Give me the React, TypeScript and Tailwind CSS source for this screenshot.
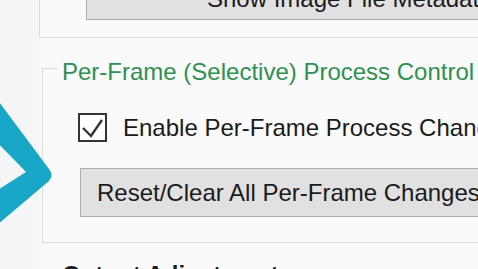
import React from "react";

export default function App() {
  return (
    <div
      className="relative flex h-[269px] w-[478px] overflow-hidden bg-[#fafafa] text-[#1b1b1b]"
      style={{ fontFamily: '"Liberation Sans", Arial, sans-serif' }}
    >
      {/* left strip */}
      <div className="h-full w-[39px] shrink-0 bg-[#f4f5f6]" />

      {/* content */}
      <div className="flex w-[620px] shrink-0 flex-col">
        {/* previous group box (bottom part) */}
        <div className="flex h-[38px] shrink-0 items-start border-b border-l border-[#dcdcdc]">
          <div className="ml-[46px] flex h-[20px] w-[520px] items-end whitespace-nowrap border-b border-l border-[#adadad] bg-[#e1e1e1] pb-[8px] pl-[120px] text-[24px] leading-[24px]">
            Show Image File Metadata
          </div>
        </div>

        {/* Per-Frame group box */}
        <div className="ml-[3px] mt-[22px] flex shrink-0 flex-col">
          <div className="flex shrink-0 items-start">
            <div className="mt-[8px] h-[16px] w-[16px] border-l border-t border-[#dcdcdc]" />
            <div className="whitespace-nowrap px-[4px] text-[24px] leading-[24px] text-[#2f9052]">
              Per-Frame (Selective) Process Control
            </div>
            <div className="mt-[8px] flex-1 border-t border-[#dcdcdc]" />
          </div>
          <div className="flex shrink-0 flex-col border-b border-l border-[#dcdcdc] pb-[25px] pl-[35px] pt-[29px]">
            <div className="flex h-[29px] shrink-0 items-center gap-[16px]">
              <div className="flex h-[29px] w-[29px] shrink-0 items-center justify-center border-2 border-[#333333] bg-white">
                <svg width="25" height="25" viewBox="0 0 25 25">
                  <polyline
                    points="3,13 11,21 22,5"
                    fill="none"
                    stroke="#333333"
                    strokeWidth="2.4"
                  />
                </svg>
              </div>
              <span className="whitespace-nowrap text-[24px] leading-[24px]">
                Enable Per-Frame Process Changes
              </span>
            </div>
            <div className="ml-[2px] mt-[26px] flex h-[49px] shrink-0 items-center whitespace-nowrap border border-[#adadad] bg-[#e1e1e1] pl-[16px] text-[24px] leading-[24px]">
              Reset/Clear All Per-Frame Changes
            </div>
          </div>
        </div>

        <div className="ml-[23px] mt-[20px] shrink-0 whitespace-nowrap text-[24px] font-bold leading-[24px]">
          Output Adjustments
        </div>
      </div>

      {/* teal chevron overlay */}
      <svg
        className="pointer-events-none absolute left-0 top-0"
        width="70"
        height="269"
        viewBox="0 0 70 269"
      >
        <path
          d="M -4 98 L 49 169 Q 54 175 49 181 L -4 226 L -4 191 L 26 172 L -4 141 Z"
          fill="#19a7c7"
        />
      </svg>
    </div>
  );
}
